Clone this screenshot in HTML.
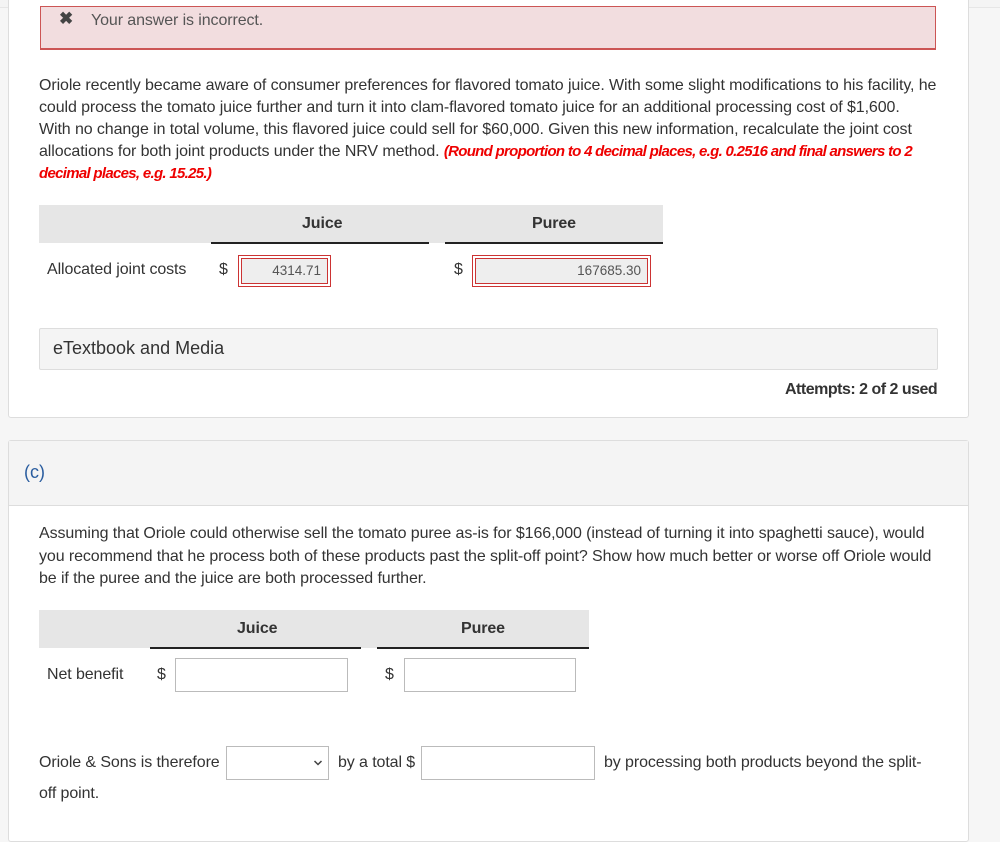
<!DOCTYPE html>
<html><head><style>
body{margin:0;width:1000px;height:805px;overflow:hidden;background:#f6f6f6;font-family:"Liberation Sans",sans-serif;color:#333;position:relative}
.a{position:absolute;white-space:nowrap}
.t{font-size:16px;letter-spacing:-0.1px}
.card{position:absolute;background:#fff;border:1px solid #ddd;border-radius:3px}
.inp{position:absolute;border:1px solid #c33;padding:2px;box-sizing:border-box}
.inp div{border:1px solid #c33;background:#eee;height:100%;box-sizing:border-box;text-align:right;font-size:13.5px;color:#555;padding-right:6px;line-height:23px}
.box{position:absolute;border:1px solid #bbb;background:#fff;box-sizing:border-box;height:34px}
.hd{position:absolute;background:#e6e6e6}
.ul{position:absolute;height:2px;background:#222}
</style></head><body>
<div class="a" style="left:0;top:0;width:1000px;height:7px;background:#f4f4f4;border-bottom:1px solid #e6e6e6"></div>
<div class="card" style="left:8px;top:-5px;width:959px;height:421px"></div>
<div class="a" style="left:40px;top:6px;width:896px;height:44px;background:#f2dddf;border:1px solid #c55;border-bottom-width:2px;box-sizing:border-box"></div>
<div class="a" style="left:59px;top:9px;font-size:17px;font-weight:bold;color:#444">✖</div>
<div class="a t" style="left:91px;top:12px;color:#555">Your answer is incorrect.</div>
<div class="a t" style="left:39px;top:75px;line-height:22px;color:#333">Oriole recently became aware of consumer preferences for flavored tomato juice. With some slight modifications to his facility, he<br>could process the tomato juice further and turn it into clam-flavored tomato juice for an additional processing cost of $1,600.<br>With no change in total volume, this flavored juice could sell for $60,000. Given this new information, recalculate the joint cost<br>allocations for both joint products under the NRV method. <i style="color:#e00;font-weight:bold;font-size:15px;letter-spacing:-0.7px">(Round proportion to 4 decimal places, e.g. 0.2516 and final answers to 2<br>decimal places, e.g. 15.25.)</i></div>
<div class="hd" style="left:39px;top:205px;width:624px;height:38px"></div>
<div class="ul" style="left:211px;top:242px;width:218px"></div>
<div class="ul" style="left:445px;top:242px;width:218px"></div>
<div class="a t" style="left:302px;top:215px;font-weight:bold">Juice</div>
<div class="a t" style="left:532px;top:215px;font-weight:bold">Puree</div>
<div class="a t" style="left:47px;top:261px">Allocated joint costs</div>
<div class="a t" style="left:219px;top:261px">$</div>
<div class="inp" style="left:238px;top:255px;width:93px;height:32px"><div>4314.71</div></div>
<div class="a t" style="left:454px;top:261px">$</div>
<div class="inp" style="left:472px;top:255px;width:179px;height:32px"><div>167685.30</div></div>
<div class="a" style="left:39px;top:328px;width:897px;height:40px;background:#f4f4f4;border:1px solid #ddd;border-radius:2px"></div>
<div class="a" style="left:53px;top:338px;font-size:18px;color:#333">eTextbook and Media</div>
<div class="a t" style="left:785px;top:381px;font-weight:bold;letter-spacing:-0.5px">Attempts: 2 of 2 used</div>
<div class="card" style="left:8px;top:440px;width:959px;height:400px"></div>
<div class="a" style="left:9px;top:441px;width:959px;height:64px;background:#f4f4f4;border-bottom:1px solid #ddd"></div>
<div class="a" style="left:24px;top:462px;font-size:18px;color:#2a5d9f">(c)</div>
<div class="a t" style="left:39px;top:523px;line-height:22.5px">Assuming that Oriole could otherwise sell the tomato puree as-is for $166,000 (instead of turning it into spaghetti sauce), would<br>you recommend that he process both of these products past the split-off point? Show how much better or worse off Oriole would<br>be if the puree and the juice are both processed further.</div>
<div class="hd" style="left:39px;top:610px;width:550px;height:38px"></div>
<div class="ul" style="left:150px;top:647px;width:211px"></div>
<div class="ul" style="left:377px;top:647px;width:212px"></div>
<div class="a t" style="left:237px;top:620px;font-weight:bold">Juice</div>
<div class="a t" style="left:461px;top:620px;font-weight:bold">Puree</div>
<div class="a t" style="left:47px;top:666px">Net benefit</div>
<div class="a t" style="left:157px;top:666px">$</div>
<div class="box" style="left:175px;top:658px;width:173px"></div>
<div class="a t" style="left:385px;top:666px">$</div>
<div class="box" style="left:404px;top:658px;width:172px"></div>
<div class="a t" style="left:39px;top:754px">Oriole &amp; Sons is therefore</div>
<div class="box" style="left:226px;top:746px;width:103px"></div>
<svg class="a" style="left:313px;top:759px" width="10" height="8"><path d="M1.5 2 L5 5.5 L8.5 2" stroke="#444" stroke-width="1.5" fill="none"/></svg>
<div class="a t" style="left:338px;top:754px">by a total $</div>
<div class="box" style="left:421px;top:746px;width:174px"></div>
<div class="a t" style="left:604px;top:754px">by processing both products beyond the split-</div>
<div class="a t" style="left:39px;top:785px">off point.</div>
</body></html>
